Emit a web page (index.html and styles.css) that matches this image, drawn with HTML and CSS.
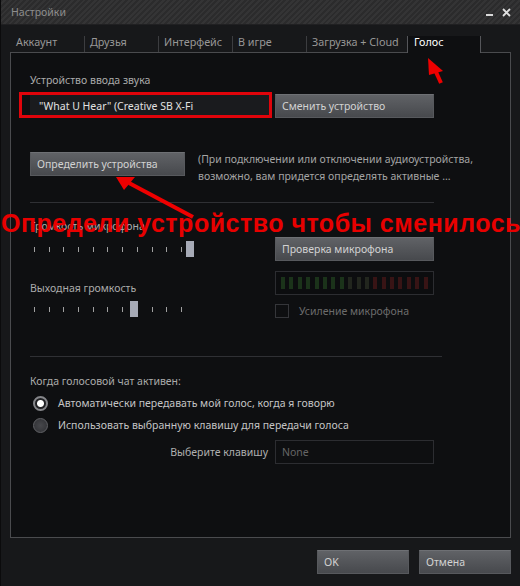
FILE: index.html
```html
<!DOCTYPE html>
<html lang="ru">
<head>
  <meta charset="UTF-8">
  <meta name="viewport" content="width=device-width, initial-scale=1.0">
  <title>Настройки</title>
  <link rel="stylesheet" href="styles.css">
</head>
<body>
  <div class="window">
    <div class="titlebar">
      <span class="title">Настройки</span>
      <div class="controls">
        <svg width="8" height="4" viewBox="0 0 8 4"><rect x="0" y="1" width="7" height="2" fill="#d8d8d8"/></svg>
        <svg width="9" height="9" viewBox="0 0 9 9"><path d="M1 1 L8 8 M8 1 L1 8" stroke="#e0e0e0" stroke-width="1.8"/></svg>
      </div>
    </div>

    <ul class="tabs">
      <li>Аккаунт</li>
      <li>Друзья</li>
      <li>Интерфейс</li>
      <li>В игре</li>
      <li class="wide">Загрузка + Cloud</li>
      <li class="active">Голос</li>
    </ul>

    <div class="panel">
      <div class="label label-first">Устройство ввода звука</div>
      <div class="row row-device">
        <div class="field field-device">"What U Hear" (Creative SB X-Fi</div>
        <button class="btn btn-col">Сменить устройство</button>
      </div>
      <div class="row row-detect">
        <button class="btn btn-detect">Определить устройства</button>
        <p class="hint">(При подключении или отключении аудиоустройства,<br>возможно, вам придется определять активные ...</p>
      </div>
      <div class="sep"></div>

      <div class="levels">
        <div class="col-left">
          <div class="label label-mic">Громкость микрофона</div>
          <div class="slider">
            <span></span><span></span><span></span><span></span><span></span><span></span>
            <span></span><span></span><span></span><span></span><span></span>
            <i class="thumb" style="left: 152px"></i>
          </div>
          <div class="label label-out">Выходная громкость</div>
          <div class="slider slider-out">
            <span></span><span></span><span></span><span></span><span></span><span></span>
            <span></span><span></span><span></span><span></span><span></span>
            <i class="thumb" style="left: 96px"></i>
          </div>
        </div>
        <div class="col-right">
          <button class="btn btn-col">Проверка микрофона</button>
          <div class="meter">
            <span class="g"></span><span class="g"></span><span class="g"></span><span class="g"></span>
            <span class="g"></span><span class="g"></span><span class="g"></span><span class="g"></span>
            <span class="m"></span><span class="m"></span><span class="m"></span>
            <span class="r"></span><span class="r"></span><span class="r"></span><span class="r"></span>
            <span class="r"></span><span class="r"></span><span class="r"></span>
          </div>
          <div class="check"><span class="box"></span>Усиление микрофона</div>
        </div>
      </div>
      <div class="sep sep-wide"></div>

      <div class="label label-chat">Когда голосовой чат активен:</div>
      <div class="radio"><span class="dot on"></span>Автоматически передавать мой голос, когда я говорю</div>
      <div class="radio"><span class="dot"></span>Использовать выбранную клавишу для передачи голоса</div>
      <div class="row row-key">
        <span class="key-label">Выберите клавишу</span>
        <div class="field field-key">None</div>
      </div>
    </div>

    <div class="footer">
      <button class="btn btn-foot">OK</button>
      <button class="btn btn-foot">Отмена</button>
    </div>

    <!-- пометки поверх скриншота -->
    <div class="note">Определи устройство чтобы сменилось</div>
    <svg class="marks" width="520" height="586" viewBox="0 0 520 586">
      <rect x="19.5" y="93.5" width="250" height="23" fill="none" stroke="#e0040b" stroke-width="3"/>
      <path d="M435 72 L440 83" stroke="#ee0000" stroke-width="4"/>
      <polygon points="427,58 442,71 428,75" fill="#ee0000"/>
      <path d="M128 183 L192 217" stroke="#ee0000" stroke-width="4"/>
      <polygon points="115,177 134,177 123,190" fill="#ee0000"/>
    </svg>
  </div>
</body>
</html>
```

FILE: styles.css
```css
* {
  margin: 0;
  padding: 0;
  box-sizing: border-box;
}

html,
body {
  width: 100%;
  height: 100%;
  overflow: hidden;
  background-color: #151618;
}

body {
  font-family: "Noto Sans", "Open Sans", sans-serif;
  font-size: 10.5px;
  color: #ababab;
}

.window {
  position: relative;
  display: flex;
  flex-direction: column;
  width: 520px;
  height: 586px;
  background-color: #17181a;
  border-left: 1px solid #0b0b0c;
}

/* заголовок окна */
.titlebar {
  display: flex;
  align-items: center;
  justify-content: space-between;
  height: 25px;
  padding: 0 9px 0 10px;
  background: repeating-linear-gradient(135deg, #2b2b2c 0, #2b2b2c 2px, #343435 2px, #343435 4px);
  border-bottom: 1px solid #202022;
}

.titlebar .title {
  font-size: 10.5px;
  color: #8e8e8e;
}

.titlebar .controls {
  display: flex;
  align-items: center;
  gap: 8px;
  padding-top: 1px;
}

.titlebar .controls svg:first-child {
  margin-top: 5px;
}

/* вкладки */
.tabs {
  display: flex;
  list-style: none;
  margin: 10px 9px 0 9px;
  height: 18px;
  border-bottom: 1px solid #4a4b4e;
}

.tabs li {
  width: 74px;
  height: 16px;
  line-height: 12px;
  padding-left: 5px;
  margin-top: 1px;
  border-left: 1px solid #3c3d40;
  color: #979797;
  font-size: 10.8px;
  white-space: nowrap;
}

.tabs li:first-child {
  border-left-color: transparent;
}

.tabs li.wide {
  width: 101px;
}

.tabs li.active {
  width: 74px;
  height: 17px;
  margin-bottom: -1px;
  padding-left: 6px;
  color: #ffffff;
  background-color: #0e0f11;
  border-left: 1px solid #55565a;
  border-right: 1px solid #55565a;
}

/* основная панель */
.panel {
  flex: 1;
  margin: 0 9px;
  padding: 0 19px;
  background-color: #0e0f11;
  border-left: 1px solid #4a4b4e;
  border-right: 1px solid #4a4b4e;
  border-bottom: 1px solid #4a4b4e;
}

.label {
  line-height: 16px;
  color: #ababab;
}

.label-first {
  margin-top: 19px;
}

.row {
  display: flex;
  align-items: flex-start;
}

.row-device {
  margin-top: 6px;
  gap: 6px;
}

.field {
  height: 24px;
  line-height: 23px;
  padding-left: 8px;
  border: 1px solid #2a2b2f;
  background-color: #131417;
}

.field-device {
  width: 239px;
  color: #e2e2e2;
  background-color: #1a1b1e;
  border-color: #1a1b1e;
}

.btn {
  display: block;
  height: 24px;
  padding-left: 6px;
  text-align: left;
  font-family: inherit;
  font-size: 10.5px;
  color: #d2d2d2;
  background: linear-gradient(#606266, #47494d);
  border: 1px solid #57595d;
  border-top-color: #6e7074;
}

.btn-col {
  width: 159px;
}

.row-detect {
  margin-top: 34px;
}

.btn-detect {
  width: 155px;
}

.hint {
  margin: -1px 0 0 13px;
  line-height: 17px;
  color: #a4a4a4;
  white-space: nowrap;
}

.sep {
  width: 404px;
  height: 1px;
  margin-top: 17px;
  background-color: #2f3034;
}

.sep-wide {
  width: 412px;
  margin-top: 38px;
}

/* громкость */
.levels {
  display: flex;
  gap: 6px;
}

.col-left {
  width: 239px;
}

.label-mic {
  margin-top: 15px;
}

.label-out {
  margin-top: 23px;
}

.slider {
  position: relative;
  display: flex;
  align-items: center;
  gap: 13.7px;
  height: 16px;
  margin-top: 7px;
  padding-left: 4px;
}

.slider-out {
  margin-top: 5px;
}

.slider span {
  width: 1px;
  height: 5px;
  background-color: #a0a0a0;
}

.slider .thumb {
  position: absolute;
  top: 0;
  width: 8px;
  height: 16px;
  margin-left: 4px;
  background-color: #a6aab6;
}

.col-right {
  margin-top: 34px;
}

.meter {
  display: flex;
  align-items: center;
  gap: 4.4px;
  width: 159px;
  height: 24px;
  margin-top: 10px;
  padding-left: 5px;
  border: 1px solid #2c2d31;
  background-color: #0c0d0f;
}

.meter span {
  width: 4px;
  height: 12px;
}

.meter .g {
  background-color: #1b331a;
}

.meter .m {
  background-color: #22261e;
}

.meter .r {
  background-color: #381415;
}

.check {
  display: flex;
  align-items: center;
  gap: 10px;
  height: 14px;
  margin-top: 9px;
  color: #6c6c6c;
}

.check .box {
  width: 14px;
  height: 14px;
  border: 1px solid #35363a;
}

/* голосовой чат */
.label-chat {
  margin-top: 16px;
}

.radio {
  display: flex;
  align-items: center;
  gap: 10px;
  height: 22px;
  padding-left: 3px;
  color: #c4c4c4;
}

.label-chat + .radio {
  margin-top: 3px;
}

.dot {
  width: 15px;
  height: 15px;
  border-radius: 50%;
  border: 1px solid #626367;
  background: radial-gradient(circle, #46474b 0, #35363a 70%);
}

.dot.on {
  border: 2px solid #85868a;
  background: radial-gradient(circle, #ffffff 0, #ffffff 3px, #202124 4px);
}

.row-key {
  gap: 6px;
  margin-top: 4px;
}

.key-label {
  width: 239px;
  line-height: 24px;
  padding-right: 1px;
  text-align: right;
  color: #b0b0b0;
}

.field-key {
  width: 159px;
  padding-left: 6px;
  color: #666666;
  background-color: #0e0f11;
  border-color: #2c2d31;
}

/* кнопки внизу */
.footer {
  display: flex;
  justify-content: flex-end;
  gap: 10px;
  height: 48px;
  padding: 12px 9px 0 0;
}

.btn-foot {
  width: 92px;
}

/* красные пометки */
.note {
  position: absolute;
  left: 0;
  top: 207px;
  font-family: "Liberation Sans", Arial, sans-serif;
  font-weight: bold;
  font-size: 25px;
  line-height: 32px;
  letter-spacing: 0.5px;
  color: #e80000;
  white-space: nowrap;
}

.marks {
  position: absolute;
  left: 0;
  top: 0;
  pointer-events: none;
}
```
